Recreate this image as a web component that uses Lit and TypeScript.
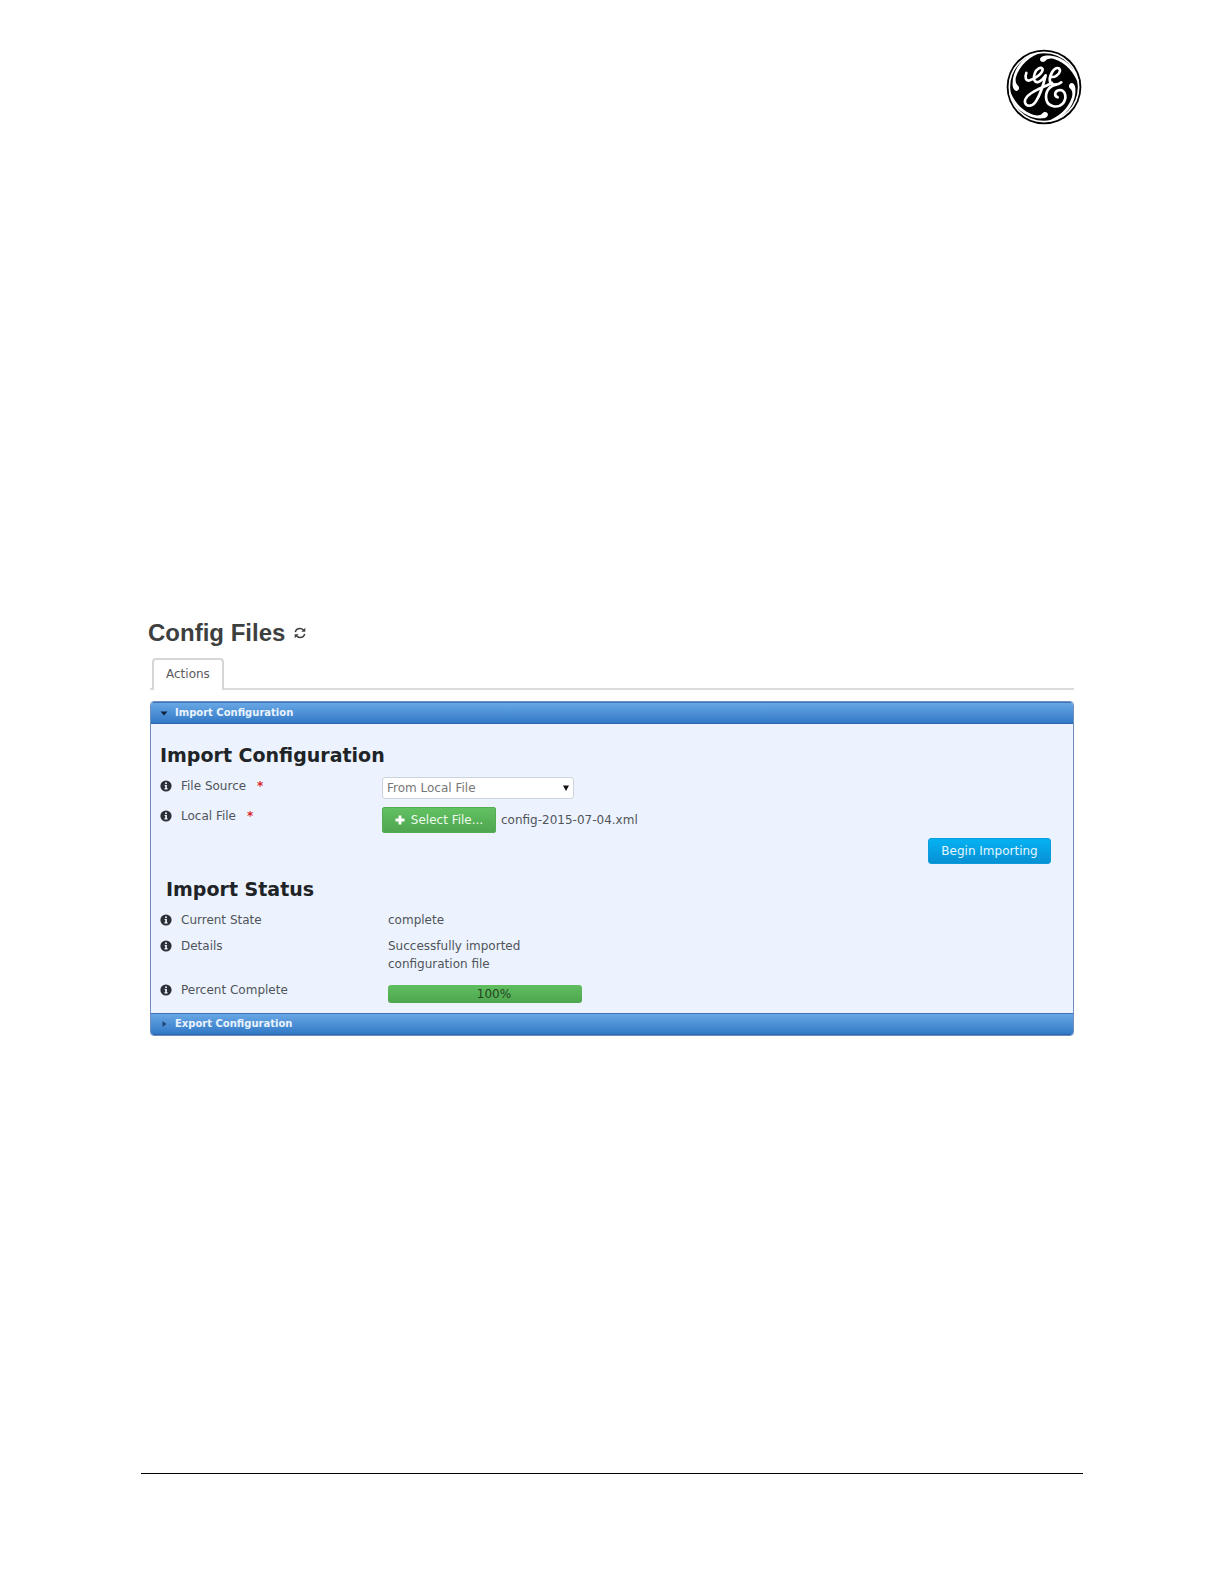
import { LitElement, html, css, svg } from "lit";
import { customElement, property } from "lit/decorators.js";

const infoIcon = html`<svg class="info" viewBox="0 0 12 12" aria-hidden="true">
  <circle cx="6" cy="6" r="5.6" fill="#2b2f36"></circle>
  <circle cx="6" cy="3.2" r="1" fill="#ecf3fe"></circle>
  <path d="M4.6 5h2.3v3.2h.7v1.2H4.4V8.200h.8V6.100h-.6z" fill="#ecf3fe"></path>
</svg>`;

const whisker = svg`<path d="M132 62C127 55 133 48 145 46C190 42 232 74 245 118L246 134C234 98 209 68 172 56C160 53 152 56 148 60C144 66 136 67 132 62Z"></path>`;

@customElement("brand-mark")
export class BrandMark extends LitElement {
  static styles = css`
    :host { display: block; }
    svg { display: block; width: 76px; height: 76px; }
  `;
  render() {
    return html`<svg viewBox="28 26 228 228" role="img" aria-label="GE">
      <circle cx="142" cy="140" r="112" fill="#000"></circle>
      <circle cx="142" cy="140" r="104" fill="none" stroke="#fff" stroke-width="5"></circle>
      <g fill="#fff">
        <g>${whisker}</g>
        <g transform="rotate(90 142 140)">${whisker}</g>
        <g transform="rotate(180 142 140)">${whisker}</g>
        <g transform="rotate(270 142 140)">${whisker}</g>
      </g>
      <g fill="none" stroke="#fff" stroke-width="8" stroke-linecap="round" stroke-linejoin="round">
        <path d="M89 98C83 112 88 124 100 120C118 114 138 99 138 87C134 77 119 85 114 100C108 115 113 128 125 125C134 122 142 112 147 105C141 130 130 163 119 181C109 199 90 201 85 187C82 172 101 158 124 147C140 140 152 135 166 128"></path>
        <path d="M161 107C172 116 188 102 190 92C190 80 177 80 168 93C156 112 156 129 170 132C180 134 188 131 194 126"></path>
        <path d="M178 133C155 138 145 157 149 178C154 200 183 205 199 189C212 172 206 149 189 149C174 150 171 167 183 171"></path>
      </g>
    </svg>`;
  }
}

@customElement("field-row")
export class FieldRow extends LitElement {
  @property() label = "";
  @property({ type: Boolean }) required = false;

  static styles = css`
    :host { display: grid; grid-template-columns: 222px minmax(0, 1fr); align-items: start; }
    .name { display: flex; align-items: center; line-height: 18px; }
    .info { width: 12px; height: 12px; margin-right: 9px; }
    .star { color: #d8232a; font-weight: bold; margin-left: 11px; }
  `;
  render() {
    return html`<div class="name">${infoIcon}<span>${this.label}</span>${this.required
        ? html`<span class="star">*</span>` : ""}</div>
      <slot></slot>`;
  }
}

@customElement("app-root")
export class AppRoot extends LitElement {
  static styles = css`
    :host {
      display: block;
      background: #fff;
      color: #50545a;
      font: 12px/18px "DejaVu Sans", Verdana, sans-serif;
    }
    * { box-sizing: border-box; }
    .page { display: flex; flex-direction: column; min-height: 100vh; padding: 49px 141px 110px; }
    .top { display: flex; justify-content: flex-end; padding-right: 1px; }
    .app { margin: 493px 9px 0; }
    .title {
      display: flex; align-items: center; gap: 9px; margin: 0 0 10px -2px;
      color: #3e4040; font: bold 24px/30px "Liberation Sans", Arial, sans-serif;
    }
    button { font: inherit; cursor: pointer; }
    .refresh { border: 0; padding: 0; background: none; width: 12px; height: 12px; display: flex; }
    .refresh svg { width: 12px; height: 12px; }
    .tabs { display: flex; border-bottom: 2px solid #dcdcdc; padding-left: 2px; }
    .tab {
      height: 32px; padding: 0 12px 2px; margin-bottom: -2px; color: #5a5a5a; background: #fff;
      border: 2px solid #d6d6d6; border-bottom: 0; border-radius: 4px 4px 0 0;
    }
    .accordion { margin-top: 11px; border: 1px solid #6e8fc0; border-radius: 4px; overflow: hidden; }
    .bar {
      display: flex; align-items: center; gap: 7px; width: 100%; height: 22px; padding: 0 9px;
      border: 0; border-top: 1px solid #4274b8; border-bottom: 1px solid #2c67ae;
      background: linear-gradient(#68a7e5, #3279c6);
      color: #e9f3ff; font-size: 10px; font-weight: bold; text-align: left;
    }
    .bar svg { width: 8px; height: 8px; }
    .panel { background: #ecf3fe; padding: 19px 22px 10px 9px; }
    .heading { margin: 0; color: #202427; font-size: 19px; line-height: 24px; font-weight: bold; }
    .status { padding-left: 6px; }
    .rows { display: flex; flex-direction: column; gap: 8px; }
    .source { margin-top: 10px; }
    select {
      appearance: none; width: 192px; height: 22px; padding: 0 4px; color: #777;
      border: 1px solid #ccd3dc; border-radius: 3px; font: inherit; font-size: 12px;
      background: #fff;
    }
    .pick { position: relative; width: 192px; height: 22px; }
    .pick svg { position: absolute; right: 5px; top: 8px; width: 6px; height: 6px; pointer-events: none; }
    .file { display: flex; align-items: center; gap: 5px; }
    .choose {
      display: flex; align-items: center; justify-content: center; gap: 6px; width: 114px; height: 26px;
      padding: 0; color: #eefaee; border: 1px solid #54ad54; border-radius: 2px;
      background: linear-gradient(#62c162, #4fa64f);
    }
    .choose svg { width: 10px; height: 10px; }
    .actions { display: flex; justify-content: flex-end; margin: 5px 0 13px; }
    .begin {
      width: 123px; height: 26px; padding: 0; color: #e4f6ff; border: 1px solid #0c9bdb;
      border-radius: 3px; background: linear-gradient(#04b2f2, #0890d4);
    }
    .value { padding-left: 6px; max-width: 160px; }
    .meter {
      width: 194px; height: 18px; margin: 4px 0 0 6px; border-radius: 3px; overflow: hidden;
      background: #fff;
    }
    .fill { height: 100%; padding-left: 18px; text-align: center; color: #234323; background: linear-gradient(#5fbe5f, #4ea64e); }
    .rule { width: 100%; margin: auto 0 0; border: 0; border-top: 1px solid #000; }
  `;

  private percent = 100;

  render() {
    return html`<div class="page">
      <header class="top"><brand-mark></brand-mark></header>
      <main class="app">
        <h1 class="title">Config Files
          <button class="refresh" aria-label="Refresh">
            <svg viewBox="0 0 12 12" fill="none" stroke="#3e4040" stroke-width="1.5">
              <path d="M1.300 5.200C1.800 2.900 3.700 1.600 6 1.600C7.400 1.600 8.700 2.200 9.600 3.200M10.700 6.800C10.200 9.100 8.300 10.400 6 10.400C4.600 10.400 3.300 9.800 2.400 8.800"></path>
              <path d="M11.300.8V4.800H7.300ZM.7 11.200V7.200H4.700Z" fill="#3e4040" stroke="none"></path>
            </svg>
          </button>
        </h1>
        <nav class="tabs" role="tablist"><button class="tab" role="tab" aria-selected="true">Actions</button></nav>
        <section class="accordion">
          <button class="bar" aria-expanded="true">
            <svg viewBox="0 0 8 8"><path d="M.5 2.500H7.500L4 6.500Z" fill="#10243e"></path></svg>Import Configuration
          </button>
          <div class="panel">
            <h2 class="heading">Import Configuration</h2>
            <div class="rows source">
              <field-row label="File Source" required>
                <div class="pick">
                  <select aria-label="File Source"><option>From Local File</option></select>
                  <svg viewBox="0 0 6 6"><path d="M0 .5H6L3 6Z" fill="#111"></path></svg>
                </div>
              </field-row>
              <field-row label="Local File" required>
                <div class="file">
                  <button class="choose">
                    <svg viewBox="0 0 10 10"><path d="M3.600.5H6.400V3.600H9.500V6.400H6.400V9.500H3.600V6.400H.5V3.600H3.600Z" fill="#fff"></path></svg>Select File...
                  </button>
                  <span>config-2015-07-04.xml</span>
                </div>
              </field-row>
            </div>
            <div class="actions"><button class="begin">Begin Importing</button></div>
            <h2 class="heading status">Import Status</h2>
            <div class="rows source">
              <field-row label="Current State"><div class="value">complete</div></field-row>
              <field-row label="Details"><div class="value">Successfully imported configuration file</div></field-row>
              <field-row label="Percent Complete">
                <div class="meter" role="progressbar" aria-label="Percent Complete" aria-valuenow=${this.percent}>
                  <div class="fill" style="width:${this.percent}%">${this.percent}%</div>
                </div>
              </field-row>
            </div>
          </div>
          <button class="bar" aria-expanded="false">
            <svg viewBox="0 0 8 8"><path d="M2.500 1L6.500 4L2.500 7Z" fill="#24466e"></path></svg>Export Configuration
          </button>
        </section>
      </main>
      <hr class="rule">
    </div>`;
  }
}
